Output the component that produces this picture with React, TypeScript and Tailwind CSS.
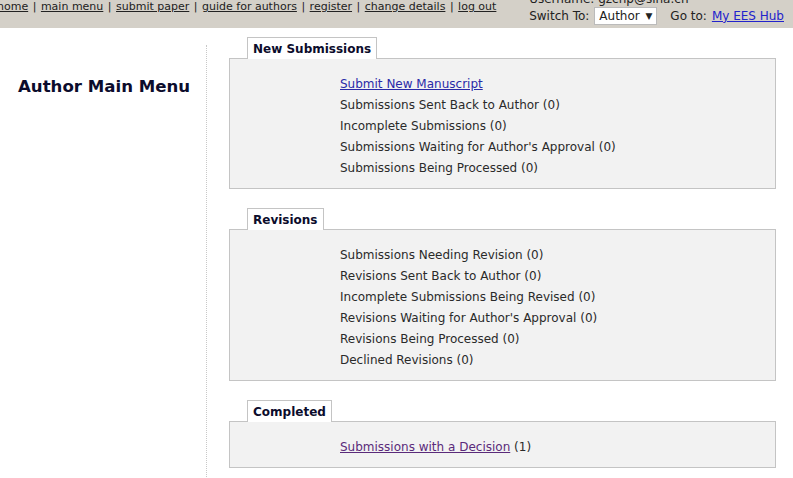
import React from 'react';

const navLinks = ['home', 'main menu', 'submit paper', 'guide for authors', 'register', 'change details', 'log out'];

const Section = ({ title, children }: { title: string; children: React.ReactNode }) => (
  <div className="flex flex-col items-start">
    <div className="ml-[18px] h-[22px] whitespace-nowrap bg-white border border-b-0 border-[#c4c4c4] px-[5px] pt-[3px] text-[12px] font-bold text-[#0c0c2c] leading-[16px] relative z-10 -mb-px">
      {title}
    </div>
    <div className="w-[547px] bg-[#f2f2f2] border border-[#c4c4c4] pl-[110px] pt-[15px] pb-[9px]">
      {children}
    </div>
  </div>
);

const Item = ({ children }: { children: React.ReactNode }) => (
  <div className="h-[21px] leading-[21px] text-[12px] text-[#2a2a2a]">{children}</div>
);

export default function App() {
  return (
    <div className="w-[793px] h-[478px] overflow-hidden bg-white" style={{ fontFamily: '"DejaVu Sans", Verdana, sans-serif' }}>
      {/* top bar */}
      <div className="h-[28px] bg-[#d4d0c8] flex justify-between overflow-hidden">
        <div className="-ml-[3px] text-[11px] leading-[14px] text-[#222] flex gap-[4.5px]">
          {navLinks.map((l, i) => (
            <React.Fragment key={l}>
              {i > 0 && <span>|</span>}
              <a className="underline">{l}</a>
            </React.Fragment>
          ))}
        </div>
        <div className="-mt-[8px] mr-[9px] text-[12px] leading-[15px] text-[#222]">
          <div>Username: gzchp@sina.cn</div>
          <div className="flex items-center gap-[5px]">
            <span>Switch To:</span>
            <span className="h-[18px] w-[63px] bg-white border border-[#bbb] flex items-center justify-between px-[4px] text-[12px]">
              Author <span className="text-[9px]">▼</span>
            </span>
            <span className="ml-[8px]">Go to:</span>
            <a className="text-[#2222cc] underline">My EES Hub</a>
          </div>
        </div>
      </div>

      <div className="flex">
        {/* left column */}
        <div className="w-[207px] border-r border-dotted border-[#c8c8c8] mt-[17px] h-[440px]">
          <h1 className="ml-[18px] mt-[30px] text-[16.6px] font-bold text-[#0c0c2c]">Author Main Menu</h1>
        </div>

        {/* right column */}
        <div className="ml-[22px] pt-[9px] flex flex-col gap-[19px]">
          <Section title="New Submissions">
            <Item><a className="text-[#2a2aa8] underline">Submit New Manuscript</a></Item>
            <Item>Submissions Sent Back to Author (0)</Item>
            <Item>Incomplete Submissions (0)</Item>
            <Item>Submissions Waiting for Author's Approval (0)</Item>
            <Item>Submissions Being Processed (0)</Item>
          </Section>
          <Section title="Revisions">
            <Item>Submissions Needing Revision (0)</Item>
            <Item>Revisions Sent Back to Author (0)</Item>
            <Item>Incomplete Submissions Being Revised (0)</Item>
            <Item>Revisions Waiting for Author's Approval (0)</Item>
            <Item>Revisions Being Processed (0)</Item>
            <Item>Declined Revisions (0)</Item>
          </Section>
          <Section title="Completed">
            <Item>
              <a className="text-[#5a2a7a] underline">Submissions with a Decision</a> (1)
            </Item>
          </Section>
        </div>
      </div>
    </div>
  );
}
